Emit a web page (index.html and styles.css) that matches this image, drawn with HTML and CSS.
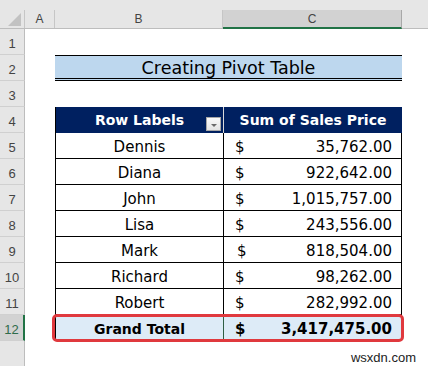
FILE: index.html
```html
<!DOCTYPE html>
<html lang="en">
<head>
    <meta charset="UTF-8">
    <title>Creating Pivot Table</title>
    <link rel="stylesheet" href="styles.css">
</head>
<body>
    <div class="sheet">
        <div class="strip"></div>

        <!-- column headers -->
        <div class="row head-row">
            <div class="corner"><span class="corner-tri"></span></div>
            <div class="col-head">A</div>
            <div class="col-head">B</div>
            <div class="col-head selected">C</div>
            <div class="col-head rest"></div>
        </div>

        <div class="row">
            <div class="row-head">1</div>
            <div></div><div></div><div></div><div></div>
        </div>

        <div class="row">
            <div class="row-head">2</div>
            <div></div>
            <div class="title">Creating Pivot Table</div>
            <div></div>
        </div>

        <div class="row">
            <div class="row-head">3</div>
            <div></div><div></div><div></div><div></div>
        </div>

        <div class="row">
            <div class="row-head">4</div>
            <div></div>
            <div class="th th-label">
                <span></span>
                <span>Row Labels</span>
                <span class="filter-btn"><span class="arrow"></span></span>
            </div>
            <div class="th th-sum">Sum of Sales Price</div>
            <div></div>
        </div>

        <div class="row">
            <div class="row-head">5</div>
            <div></div>
            <div class="cell name">Dennis</div>
            <div class="cell money"><span>$</span><span>35,762.00</span></div>
            <div></div>
        </div>

        <div class="row">
            <div class="row-head">6</div>
            <div></div>
            <div class="cell name">Diana</div>
            <div class="cell money"><span>$</span><span>922,642.00</span></div>
            <div></div>
        </div>

        <div class="row">
            <div class="row-head">7</div>
            <div></div>
            <div class="cell name">John</div>
            <div class="cell money"><span>$</span><span>1,015,757.00</span></div>
            <div></div>
        </div>

        <div class="row">
            <div class="row-head">8</div>
            <div></div>
            <div class="cell name">Lisa</div>
            <div class="cell money"><span>$</span><span>243,556.00</span></div>
            <div></div>
        </div>

        <div class="row">
            <div class="row-head">9</div>
            <div></div>
            <div class="cell name">Mark</div>
            <div class="cell money shifted"><span>$</span><span>818,504.00</span></div>
            <div></div>
        </div>

        <div class="row">
            <div class="row-head">10</div>
            <div></div>
            <div class="cell name">Richard</div>
            <div class="cell money"><span>$</span><span>98,262.00</span></div>
            <div></div>
        </div>

        <div class="row">
            <div class="row-head">11</div>
            <div></div>
            <div class="cell name">Robert</div>
            <div class="cell money"><span>$</span><span>282,992.00</span></div>
            <div></div>
        </div>

        <div class="row total-row">
            <div class="row-head selected">12</div>
            <div></div>
            <div class="cell total name">Grand Total</div>
            <div class="cell total money"><span>$</span><span>3,417,475.00</span></div>
            <div></div>
            <!-- red highlight round the grand total -->
            <div class="highlight"></div>
        </div>

        <div class="row last-row">
            <div class="row-head"></div>
            <div></div><div></div><div></div><div></div>
        </div>

        <div class="watermark">wsxdn.com</div>
    </div>
</body>
</html>
```

FILE: styles.css
```css
* {
    margin: 0;
    padding: 0;
    box-sizing: border-box;
}

body {
    background: #ffffff;
    font-family: 'Comic Sans MS', 'DejaVu Sans', sans-serif;
    overflow: hidden;
}

.sheet {
    width: 428px;
    height: 366px;
    position: relative;
    display: flex;
    flex-direction: column;
}

.strip {
    height: 10px;
    background: #e6e6e6;
}

.row {
    display: grid;
    grid-template-columns: 25px 30px 168px 179px 1fr;
    height: 26px;
    position: relative;
}

/* column headers */
.head-row {
    height: 19px;
    background: #e6e6e6;
    border-bottom: 1px solid #bdbdbd;
}

.corner {
    border-right: 1px solid #c6c6c6;
    display: flex;
    justify-content: flex-end;
    align-items: flex-end;
    padding: 0 3px 2px 0;
}

.corner-tri {
    width: 0;
    height: 0;
    border-left: 13px solid transparent;
    border-bottom: 13px solid #c2c2c2;
}

.col-head {
    font-family: 'Liberation Sans', Arial, sans-serif;
    font-size: 12px;
    color: #444444;
    display: flex;
    justify-content: center;
    align-items: center;
    border-right: 1px solid #c6c6c6;
}

.col-head.selected {
    background: #d2d2d2;
    border-bottom: 2px solid #217346;
    border-right: 1px solid #a8a8a8;
    margin-bottom: -1px;
}

.col-head.rest {
    border-right: none;
}

/* row headers */
.row-head {
    background: #e6e6e6;
    border-right: 1px solid #bdbdbd;
    border-bottom: 1px solid #d0d0d0;
    font-family: 'Liberation Sans', Arial, sans-serif;
    font-size: 13px;
    color: #444444;
    display: flex;
    justify-content: center;
    align-items: flex-end;
    padding-bottom: 3px;
}

.row-head.selected {
    background: #d2d2d2;
    color: #2e6b4a;
    border-right: 2px solid #217346;
}

.last-row {
    flex: 1;
}

.last-row .row-head {
    border-bottom: none;
}

/* title */
.title {
    grid-column: span 2;
    background: #bdd7ee;
    border-top: 1px solid #000000;
    border-bottom: 3px double #000000;
    font-size: 17.5px;
    color: #000000;
    display: flex;
    justify-content: center;
    align-items: center;
    padding-top: 1px;
}

/* table header */
.th {
    background: #002060;
    color: #ffffff;
    font-weight: 700;
    font-size: 14px;
}

.th-label {
    border-left: 1px solid #000000;
    display: grid;
    grid-template-columns: 1fr auto 1fr;
    align-items: center;
}

.th-sum {
    border-left: 1px solid #d9d9d9;
    display: flex;
    justify-content: center;
    align-items: center;
}

.filter-btn {
    justify-self: end;
    align-self: end;
    width: 15px;
    height: 14px;
    margin: 0 2px 2px 0;
    background: linear-gradient(#fafafa, #e4e4e4);
    border: 1px solid #a6a6a6;
    display: flex;
    justify-content: center;
    align-items: center;
}

.arrow {
    width: 0;
    height: 0;
    border-left: 3px solid transparent;
    border-right: 3px solid transparent;
    border-top: 3px solid #6b6b6b;
    margin-top: 2px;
}

/* body cells */
.cell {
    font-size: 15px;
    color: #000000;
    border-bottom: 1px solid #000000;
    border-left: 1px solid #000000;
    display: flex;
    align-items: center;
    padding-top: 2px;
}

.name {
    justify-content: center;
}

.money {
    border-right: 1px solid #000000;
    justify-content: space-between;
    padding-left: 11px;
    padding-right: 9px;
}

.money.shifted {
    padding-left: 13px;
}

.total {
    background: #ddebf7;
    font-weight: 700;
    font-size: 14px;
    border-bottom: none;
}

.total.money {
    border-left: 1px solid #2f5e44;
    font-size: 15px;
}

.highlight {
    position: absolute;
    left: 52px;
    top: -1px;
    width: 352px;
    height: 28px;
    border: 3px solid #e0393e;
    border-radius: 5px;
    pointer-events: none;
}

.watermark {
    position: absolute;
    right: 12px;
    bottom: 1px;
    font-family: 'Liberation Sans', Arial, sans-serif;
    font-size: 13px;
    color: #222222;
}
```
